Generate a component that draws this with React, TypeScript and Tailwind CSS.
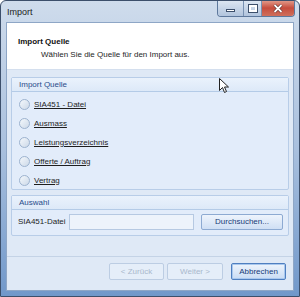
import React from 'react';

const font = { fontFamily: '"Liberation Sans", Arial, sans-serif' };

const Radio = ({ label }: { label: string }) => (
    <div className="flex items-center gap-[4px] h-[19px]">
        <span className="w-[11px] h-[11px] rounded-full border border-[#9db3cf] bg-gradient-to-br from-[#f4f8fc] to-[#cdd9e8]" />
        <span className="underline text-[8px] text-[#1e1e1e] underline-offset-[1px] whitespace-nowrap">{label}</span>
    </div>
);

const GroupBox = ({ title, children, className }: { title: string; children: React.ReactNode; className?: string }) => (
    <div className={`border border-[#b8cde8] rounded-[2px] bg-[#e2ecfa] ${className || ''}`}>
        <div className="h-[14px] border-b border-[#b4cbe7] bg-gradient-to-b from-[#eaf2fc] to-[#dde9f8] px-[7px] flex items-center text-[8px] text-[#2a4c8a]">
            {title}
        </div>
        {children}
    </div>
);

export default function App() {
    return (
        <div className="relative w-[300px] h-[297px] overflow-hidden bg-gradient-to-b from-[#cfdcec] via-[#a9c0de] to-[#7198ca] border border-[#3c4f6b] rounded-t-[6px] whitespace-nowrap" style={font}>
            {/* title bar */}
            <div className="h-[21px] flex items-start">
                <div className="pl-[6px] pt-[5px] text-[9px] text-[#1b1b1b]">Import</div>
                <div className="ml-auto mr-[4px] flex h-[17px] mt-[-1px] rounded-b-[4px] border border-[#5d789c] border-t-0 overflow-hidden">
                    <div className="w-[26px] bg-gradient-to-b from-[#dfe8f3] to-[#b1c4dd] border-r border-[#7891b2] flex items-center justify-center">
                        <span className="w-[9px] h-[3px] bg-white border border-[#3c4f6b] mt-[5px]" />
                    </div>
                    <div className="w-[18px] bg-gradient-to-b from-[#dfe8f3] to-[#b1c4dd] border-r border-[#7891b2] flex items-center justify-center">
                        <span className="w-[8px] h-[7px] border-[2px] border-white outline outline-1 outline-[#3c4f6b]" />
                    </div>
                    <div className="w-[32px] bg-gradient-to-b from-[#e3a091] via-[#c64c3d] to-[#cf6f5c] flex items-center justify-center">
                        <svg width="10" height="9" viewBox="0 0 10 9">
                            <path d="M1.5 1 L8.5 8 M8.5 1 L1.5 8" stroke="#4a2020" strokeWidth="3" />
                            <path d="M1.5 1 L8.5 8 M8.5 1 L1.5 8" stroke="#ffffff" strokeWidth="1.8" />
                        </svg>
                    </div>
                </div>
            </div>

            {/* client */}
            <div className="ml-[5px] w-[288px] h-[269px] bg-[#dfe9f6] border border-[#8ea6c6] flex flex-col">
                <div className="h-[47px] bg-white border-b border-[#d4dfee] pl-[11px] pt-[13px]">
                    <div className="text-[8px] font-bold text-[#111]">Import Quelle</div>
                    <div className="pl-[23px] mt-[1px] text-[8px] text-[#1e1e1e]">Wählen Sie die Quelle für den Import aus.</div>
                </div>

                <div className="px-[4px] pt-[7px] flex flex-col gap-[5px]">
                    <GroupBox title="Import Quelle" className="h-[113px]">
                        <div className="px-[7px] pt-[3px] flex flex-col">
                            <Radio label="SIA451 - Datei" />
                            <Radio label="Ausmass" />
                            <Radio label="Leistungsverzeichnis" />
                            <Radio label="Offerte / Auftrag" />
                            <Radio label="Vertrag" />
                        </div>
                    </GroupBox>
                    <GroupBox title="Auswahl" className="h-[41px]">
                        <div className="flex items-center pl-[6px] pt-[4px]">
                            <span className="w-[51px] text-[8px] text-[#1e1e1e]">SIA451-Datei</span>
                            <span className="w-[125px] h-[16px] border border-[#b6c9e2] bg-[#edf3fb]" />
                            <button className="ml-[7px] w-[82px] h-[16px] rounded-[2px] border border-[#8daad2] bg-gradient-to-b from-[#eef4fc] to-[#cfdff4] text-[8px] text-[#173b78]">
                                Durchsuchen...
                            </button>
                        </div>
                    </GroupBox>
                </div>

                <div className="mt-auto h-[34px] border-t border-[#c4d3e6] flex items-center justify-end gap-[3px] pr-[7px] pb-[4px]">
                    <button className="w-[55px] h-[17px] rounded-[2px] border border-[#bccde3] bg-[#e5eef9] text-[8px] text-[#a9b8cc]">&lt; Zurück</button>
                    <button className="w-[56px] h-[17px] rounded-[2px] border border-[#bccde3] bg-[#e5eef9] text-[8px] text-[#a9b8cc] mr-[5px]">Weiter &gt;</button>
                    <button className="w-[55px] h-[17px] rounded-[2px] border border-[#4f7fc0] bg-gradient-to-b from-[#eef4fc] to-[#c9dcf4] text-[8px] text-[#173b78] shadow-[inset_0_0_0_1px_#a9c8ee]">Abbrechen</button>
                </div>
            </div>

            {/* mouse cursor */}
            <svg className="absolute left-[218px] top-[77px]" width="11" height="16" viewBox="0 0 11 16">
                <path d="M0.5 0.5 L0.5 12.5 L3.5 9.5 L5.5 14.5 L7.5 13.5 L5.5 9 L9.5 9 Z" fill="#ffffff" stroke="#222" strokeWidth="1" />
            </svg>
        </div>
    );
}
